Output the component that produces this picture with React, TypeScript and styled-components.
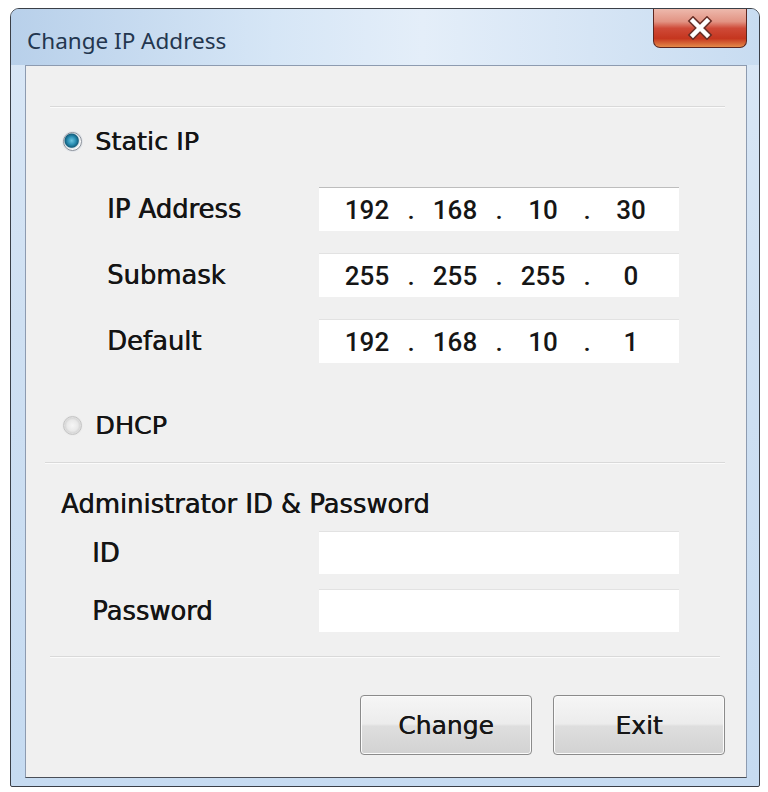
import React from "react";
import styled, { createGlobalStyle } from "styled-components";

const GlobalStyle = createGlobalStyle`
  html, body {
    margin: 0;
    padding: 0;
    background: #ffffff;
  }
`;

const Window = styled.div`
  box-sizing: border-box;
  width: 750px;
  height: 779px;
  margin: 8px 0 0 10px;
  border: 1px solid #3a3f47;
  border-radius: 9px 9px 2px 2px;
  background: linear-gradient(to bottom, #c2d8ef 0%, #d9e7f6 5%, #cfe0f2 40%, #c6dbf1 100%);
  display: flex;
  flex-direction: column;
  overflow: hidden;
`;

const TitleBar = styled.div`
  height: 56px;
  display: flex;
  justify-content: space-between;
  align-items: flex-start;
  padding-left: 16px;
  background: linear-gradient(
    to right,
    #b8d0ea 0%,
    #d6e6f6 35%,
    #e4eef9 55%,
    #c8dcf1 100%
  );
`;

const Title = styled.span`
  margin-top: 16px;
  font-family: "Noto Sans", "Open Sans", sans-serif;
  font-size: 22.5px;
  color: #23364f;
`;

const CloseButton = styled.button`
  box-sizing: border-box;
  width: 94px;
  height: 40px;
  margin: -1px 12px 0 0;
  padding: 0;
  border: 1px solid #5c2620;
  border-top: none;
  border-radius: 0 0 7px 7px;
  background: linear-gradient(
    to bottom,
    #eebcb0 0%,
    #e29383 35%,
    #cf4a38 52%,
    #c5361f 78%,
    #e48948 100%
  );
  display: flex;
  align-items: center;
  justify-content: center;
`;

const Client = styled.div`
  box-sizing: border-box;
  width: 722px;
  height: 713px;
  margin-left: 14px;
  border: 1px solid #8d9bb0;
  border-bottom-color: #4a4f57;
  background: #f0f0f0;
  display: flex;
  flex-direction: column;
  font-family: "DejaVu Sans", Verdana, sans-serif;
  color: #141414;
`;

const Divider = styled.div<{ $top: number; $left: number; $right: number }>`
  margin: ${(p) => p.$top}px ${(p) => p.$right}px 0 ${(p) => p.$left}px;
  height: 0;
  border-top: 1px solid #d9d9d9;
  border-bottom: 1px solid #fbfbfb;
`;

const RadioRow = styled.label<{ $top: number }>`
  margin: ${(p) => p.$top}px 0 0 37px;
  height: 30px;
  display: flex;
  align-items: center;
  gap: 13px;
  font-size: 25.5px;
  text-shadow: 0.5px 0 0 #141414;
`;

const Radio = styled.span<{ $checked?: boolean }>`
  box-sizing: border-box;
  width: 19px;
  height: 19px;
  border-radius: 50%;
  border: 1px solid ${(p) => (p.$checked ? "#8a9099" : "#c4c4c4")};
  background: ${(p) =>
    p.$checked
      ? "radial-gradient(circle at 45% 45%, #6cc6e0 0%, #2b90b5 30%, #14607f 50%, #dfe6ea 58%, #ffffff 70%, #cfd4d8 100%)"
      : "radial-gradient(circle at 50% 50%, #f6f6f6 0%, #e9e9e9 45%, #d9d9d9 60%, #f4f4f4 100%)"};
  box-shadow: 0 0 0 1px ${(p) => (p.$checked ? "#dfe3e8" : "#ececec")};
`;

const FieldGrid = styled.div<{ $top: number; $left: number; $label: number; $gap: number; $height: number }>`
  margin: ${(p) => p.$top}px 0 0 ${(p) => p.$left}px;
  display: grid;
  grid-template-columns: ${(p) => p.$label}px 360px;
  grid-auto-rows: ${(p) => p.$height}px;
  row-gap: ${(p) => p.$gap}px;
  align-items: center;
`;

const Label = styled.span`
  font-size: 25.8px;
  color: #141414;
  text-shadow: 0.6px 0 0 #141414;
`;

const Field = styled.div<{ $first?: boolean }>`
  box-sizing: border-box;
  height: 100%;
  background: #ffffff;
  border-top: 1px solid ${(p) => (p.$first ? "#bdbdbd" : "#e2e2e2")};
`;

const IpField = styled(Field)`
  padding: 0 8px;
  display: grid;
  grid-template-columns: 1fr 8px 1fr 8px 1fr 8px 1fr;
  align-items: center;
  text-align: center;
  font-family: Roboto, "Liberation Sans", sans-serif;
  font-weight: 500;
  font-size: 26px;
  color: #161616;
`;

const SectionTitle = styled.div`
  margin: 25px 0 0 35px;
  height: 30px;
  line-height: 30px;
  font-size: 25.8px;
  text-shadow: 0.6px 0 0 #141414;
`;

const ButtonRow = styled.div`
  margin: 37px 21px 0 0;
  display: flex;
  justify-content: flex-end;
  gap: 21px;
`;

const Button = styled.button`
  box-sizing: border-box;
  width: 172px;
  height: 60px;
  border: 1px solid #8b8b8b;
  border-radius: 4px;
  background: linear-gradient(
    to bottom,
    #f6f6f6 0%,
    #ececec 48%,
    #dedede 52%,
    #d2d2d2 100%
  );
  box-shadow: inset 0 0 0 1px #fbfbfb;
  font-family: "DejaVu Sans", Verdana, sans-serif;
  font-size: 25px;
  color: #161616;
  text-shadow: 0.3px 0 0 #161616;
`;

const CloseIcon = () => (
  <svg width="30" height="24" viewBox="0 0 30 24">
    <path
      d="M8 5 L22 19 M22 5 L8 19"
      stroke="#6a3028"
      strokeWidth="7.5"
      strokeLinecap="square"
      fill="none"
    />
    <path
      d="M8 5 L22 19 M22 5 L8 19"
      stroke="#ffffff"
      strokeWidth="4.5"
      strokeLinecap="square"
      fill="none"
    />
  </svg>
);

const IpAddress = ({ value, first }: { value: string; first?: boolean }) => {
  const parts = value.split(".");
  return (
    <IpField $first={first}>
      {parts.map((part, i) => (
        <React.Fragment key={i}>
          <span>{part}</span>
          {i < parts.length - 1 && <span>.</span>}
        </React.Fragment>
      ))}
    </IpField>
  );
};

const App = () => (
  <>
    <GlobalStyle />
    <Window>
      <TitleBar>
        <Title>Change IP Address</Title>
        <CloseButton aria-label="Close">
          <CloseIcon />
        </CloseButton>
      </TitleBar>
      <Client>
        <Divider $top={40} $left={24} $right={21} />
        <RadioRow $top={18}>
          <Radio $checked />
          Static IP
        </RadioRow>
        <FieldGrid $top={31} $left={81} $label={212} $gap={22} $height={44}>
          <Label>IP Address</Label>
          <IpAddress value="192.168.10.30" first />
          <Label>Submask</Label>
          <IpAddress value="255.255.255.0" />
          <Label>Default</Label>
          <IpAddress value="192.168.10.1" />
        </FieldGrid>
        <RadioRow $top={47}>
          <Radio />
          DHCP
        </RadioRow>
        <Divider $top={22} $left={19} $right={21} />
        <SectionTitle>Administrator ID &amp; Password</SectionTitle>
        <FieldGrid $top={12} $left={66} $label={227} $gap={15} $height={43}>
          <Label>ID</Label>
          <Field />
          <Label>Password</Label>
          <Field />
        </FieldGrid>
        <Divider $top={24} $left={24} $right={26} />
        <ButtonRow>
          <Button>Change</Button>
          <Button>Exit</Button>
        </ButtonRow>
      </Client>
    </Window>
  </>
);

export default App;
